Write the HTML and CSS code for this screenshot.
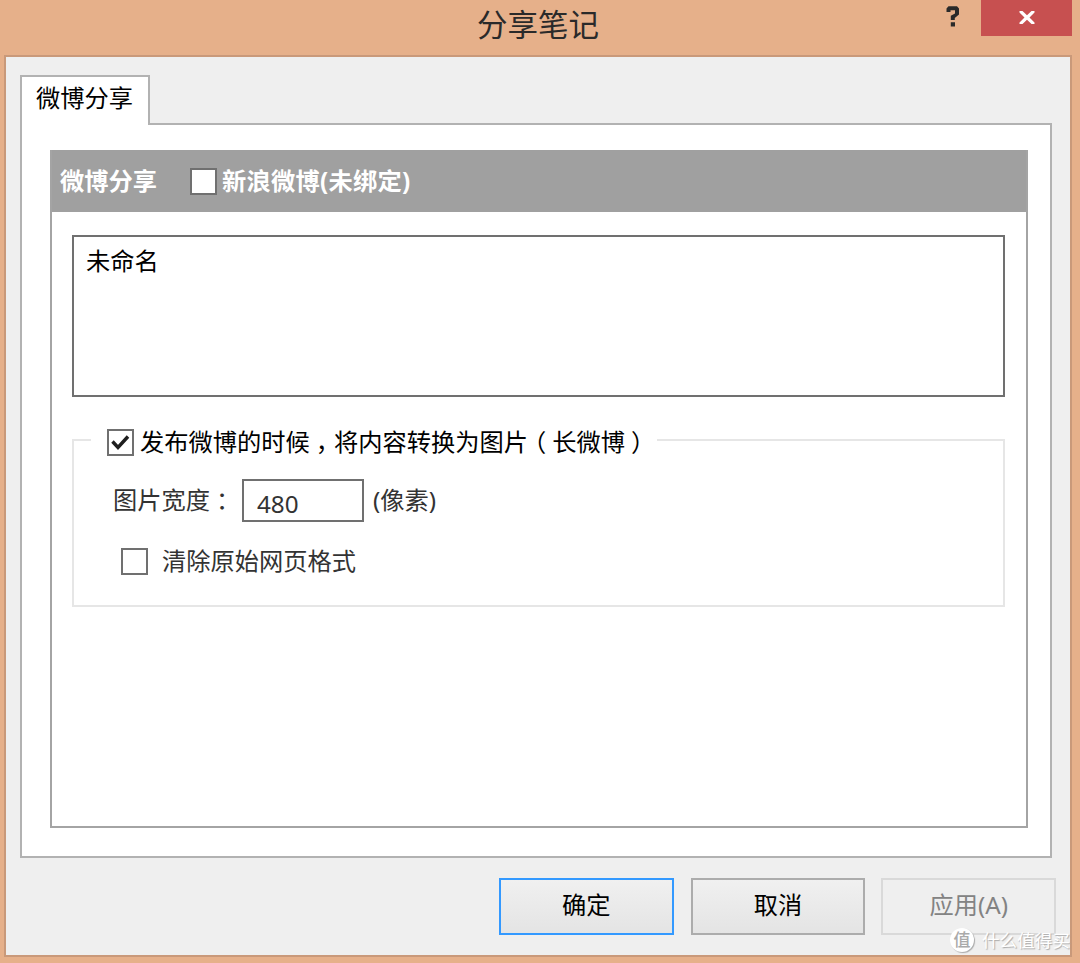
FILE: index.html
```html
<!DOCTYPE html>
<html lang="zh-CN">
<head>
<meta charset="utf-8">
<title>分享笔记</title>
<link rel="stylesheet" href="styles.css">
</head>
<body>
<div class="window">
  <header class="titlebar">
    <h1 class="title">分享笔记</h1>
    <div class="controls">
      <svg class="help" width="14" height="21" viewBox="0 0 14 21"><path d="M0.5 6V2.500L2.500 .3H11L13 2.500V8.500L8.800 12V14H4.800V9.800L9 7.500V4.300H4.500V6ZM4.800 16.300H9V20.500H4.800Z" fill="#2a2a2a"/></svg>
      <div class="close"><svg width="18" height="15" viewBox="0 0 18 15"><path d="M1.500 0H4.500L9 4.300L13.500 0H16.500V1.500L11.500 6.500L16.500 11.500V13H13.500L9 8.700L4.500 13H1.500V11.500L6.500 6.500L1.500 1.500Z" fill="#fff"/></svg></div>
    </div>
  </header>
  <main class="client">
    <div class="tab"><span>微博分享</span></div>
    <section class="page">
      <div class="group">
        <div class="group-head">
          <span class="head-label">微博分享</span>
          <span class="check"></span>
          <span class="head-text">新浪微博(未绑定)</span>
        </div>
        <div class="note">未命名</div>
        <div class="frame">
          <div class="legend">
            <span class="check"><svg width="19" height="18" viewBox="0 0 19 18"><path d="M1.500 8.500L7 14.500L17 3.500" stroke="#1e1e1e" stroke-width="3.400" fill="none"/></svg></span>
            <span class="legend-text">发布微博的时候<span class="punct">，</span>将内容转换为图片<span class="punct">（</span>长微博<span class="punct">）</span></span>
          </div>
          <div class="size-row">
            <span class="size-label">图片宽度<span class="punct">：</span></span>
            <span class="input">480</span>
            <span class="unit">(像素)</span>
          </div>
          <div class="clear-row">
            <span class="check"></span>
            <span>清除原始网页格式</span>
          </div>
        </div>
      </div>
    </section>
    <footer class="buttons">
      <div class="button primary">确定</div>
      <div class="button">取消</div>
      <div class="button disabled">应用(A)</div>
    </footer>
  </main>
  <div class="watermark"><span class="badge">值</span><span>什么值得买</span></div>
</div>
</body>
</html>
```
FILE: styles.css
```css
* { box-sizing: border-box; }
body { margin: 0; }
.window {
  position: relative;
  width: 1080px;
  height: 963px;
  padding: 0 8px 6px 4px;
  overflow: hidden;
  background: #e6b08a;
  color: #000;
  font: 24.25px/36px "Noto Sans", "Noto Sans CJK SC", sans-serif;
  white-space: nowrap;
}
.titlebar {
  display: grid;
  grid-template-columns: 1fr;
  height: 55px;
}
.title, .controls { grid-area: 1 / 1; }
.title {
  margin: 2px 0 0;
  text-align: center;
  font-size: 30.5px;
  line-height: 44px;
  font-weight: 400;
  color: #2a2a2a;
}
.controls {
  display: flex;
  justify-content: flex-end;
  align-items: flex-start;
}
.help { margin: 6px 21px 0 0; }
.close {
  display: flex;
  align-items: center;
  justify-content: center;
  width: 91px;
  height: 36px;
  background: #c75050;
}
.client {
  height: 902px;
  padding: 18px 14px 0;
  border: 2px solid #c9997a;
  background: #efefef;
}
.tab {
  position: relative;
  z-index: 1;
  width: 130px;
  height: 50px;
  padding: 3px 0 0 14px;
  border: 2px solid #b2b2b2;
  border-bottom: 0;
  background: #fff;
}
.page {
  width: 1032px;
  height: 735px;
  margin-top: -2px;
  padding: 25px 22px 0 28px;
  border: 2px solid #b2b2b2;
  background: #fff;
}
.group {
  width: 978px;
  height: 678px;
  padding: 0 20px;
  border: 2px solid #a4a4a4;
  border-top: 0;
}
.group-head {
  display: flex;
  align-items: center;
  height: 62px;
  margin: 0 -20px 23px;
  padding-left: 8px;
  background: #a0a0a0;
  color: #fff;
  font-weight: 700;
}
.head-label { margin-right: 33px; }
.head-text { margin-left: 5px; letter-spacing: 0.25px; }
.check {
  display: flex;
  flex: none;
  align-items: center;
  justify-content: center;
  width: 27px;
  height: 27px;
  border: 2px solid #707070;
  background: #fff;
}
.note {
  width: 933px;
  height: 162px;
  padding: 6px 12px;
  border: 2px solid #707070;
}
.frame {
  width: 933px;
  height: 168px;
  margin-top: 42px;
  border: 2px solid #e6e6e6;
}
.legend {
  display: flex;
  align-items: center;
  width: 566px;
  height: 36px;
  margin: -17px 0 0 17px;
  padding-left: 16px;
  background: #fff;
}
.legend-text { margin-left: 6px; }
.punct {
  display: inline-block;
  width: 24.25px;
  text-align: center;
  font-family: "Noto Sans CJK SC", sans-serif;
  font-feature-settings: "halt";
  line-height: 1;
}
.size-row {
  display: flex;
  height: 43px;
  margin: 19px 0 0 39px;
  color: #333;
}
.size-label { width: 129px; margin-top: 3px; }
.input {
  width: 122px;
  height: 43px;
  padding: 5px 0 0 13px;
  border: 2px solid #707070;
}
.unit { margin: 3px 0 0 9px; }
.clear-row {
  display: flex;
  align-items: center;
  gap: 14px;
  margin: 21px 0 0 47px;
  color: #333;
}
.buttons {
  display: flex;
  gap: 17px;
  margin: 20px 0 0 479px;
}
.button {
  width: 175px;
  height: 57px;
  padding-top: 7px;
  border: 2px solid #acacac;
  background: linear-gradient(#f0f0f0, #e4e4e4);
  text-align: center;
}
.primary { border-color: #3399ff; }
.disabled {
  margin-left: -1px;
  border-color: #d9d9d9;
  background: #efefef;
  color: #838383;
}
.watermark {
  position: absolute;
  left: 950px;
  top: 927px;
  display: flex;
  align-items: center;
  gap: 8px;
  height: 26px;
  color: #fff;
  font-size: 17.6px;
  text-shadow: 1px 1px 1px #aaa;
}
.badge {
  width: 24px;
  height: 24px;
  border-radius: 50%;
  background: #fff;
  box-shadow: 1px 1px 1px #aaa;
  color: #aaa;
  font-size: 17px;
  font-weight: 500;
  line-height: 23px;
  text-align: center;
  text-shadow: none;
}
```
